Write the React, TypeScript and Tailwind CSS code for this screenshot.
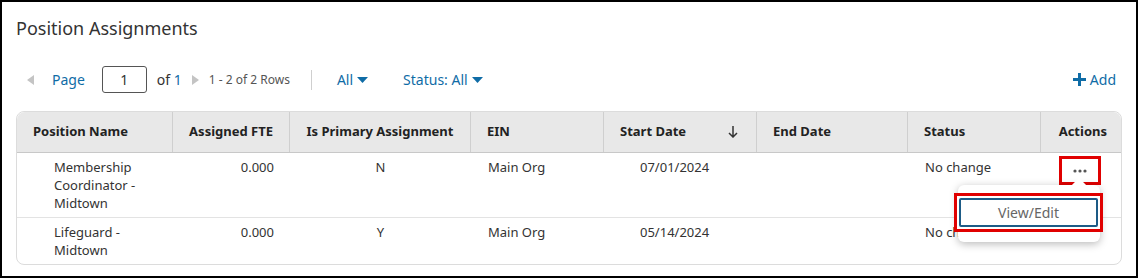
import React from "react";

type Row = {
  name: string[];
  fte: string;
  primary: string;
  ein: string;
  start: string;
  end: string;
  status: string;
};

const rows: Row[] = [
  {
    name: ["Membership", "Coordinator -", "Midtown"],
    fte: "0.000",
    primary: "N",
    ein: "Main Org",
    start: "07/01/2024",
    end: "",
    status: "No change",
  },
  {
    name: ["Lifeguard -", "Midtown"],
    fte: "0.000",
    primary: "Y",
    ein: "Main Org",
    start: "05/14/2024",
    end: "",
    status: "No change",
  },
];

const cols =
  "grid grid-cols-[156px_117px_181px_133px_153px_151px_133px_82px]";

const Caret = () => (
  <svg width="11" height="6" viewBox="0 0 11 6" className="ml-[4px] mt-[1px]">
    <path d="M0 0h11L5.5 6z" fill="#0f6ca6" />
  </svg>
);

const HeaderCell = ({
  children,
  className = "",
  last = false,
}: {
  children: React.ReactNode;
  className?: string;
  last?: boolean;
}) => (
  <div
    className={`flex h-[40px] items-center whitespace-nowrap px-[16px] text-[13px] font-bold text-[#222] ${
      last ? "" : "border-r border-[#cfcfcf]"
    } ${className}`}
  >
    {children}
  </div>
);

export default function App() {
  return (
    <div
      className="h-[278px] w-[1138px] border-2 border-black bg-white text-[#333]"
      style={{ fontFamily: '"Noto Sans", "Open Sans", sans-serif' }}
    >
      <h2 className="pl-[14px] pt-[14px] text-[18px] leading-[24px] text-[#333]">
        Position Assignments
      </h2>

      <div className="mt-[26px] flex h-[27px] items-center pl-[25px] pr-[20px] text-[14px]">
        <svg width="7" height="10" viewBox="0 0 7 10">
          <path d="M7 0v10L0 5z" fill="#c4c4c4" />
        </svg>
        <span className="ml-[18px] text-[#0f6ca6]">Page</span>
        <div className="ml-[17px] flex h-[27px] w-[45px] items-center justify-center rounded-[3px] border border-[#555]">
          1
        </div>
        <span className="ml-[10px]">
          of <span className="text-[#0f6ca6]">1</span>
        </span>
        <svg width="7" height="10" viewBox="0 0 7 10" className="ml-[10px]">
          <path d="M0 0v10l7-5z" fill="#c4c4c4" />
        </svg>
        <span className="ml-[10px] text-[12px] text-[#555]">
          1 - 2 of 2 Rows
        </span>
        <div className="ml-[21px] h-[20px] w-px bg-[#cfcfcf]" />
        <span className="ml-[25px] flex items-center text-[#0f6ca6]">
          All
          <Caret />
        </span>
        <span className="ml-[35px] flex items-center text-[#0f6ca6]">
          Status: All
          <Caret />
        </span>
        <span className="ml-auto flex items-center text-[#0f6ca6]">
          <svg width="13" height="13" viewBox="0 0 13 13" className="mr-[4px]">
            <path d="M5 0h3v5h5v3H8v5H5V8H0V5h5z" fill="#0f6ca6" />
          </svg>
          Add
        </span>
      </div>

      <div className="relative mx-[14px] mt-[18px] rounded-[8px] border border-[#dcdcdc]">
        <div className={`${cols} rounded-t-[8px] border-b border-[#c8c8c8] bg-[#e8e8e8]`}>
          <HeaderCell>Position Name</HeaderCell>
          <HeaderCell className="justify-end">Assigned FTE</HeaderCell>
          <HeaderCell className="justify-center">Is Primary Assignment</HeaderCell>
          <HeaderCell>EIN</HeaderCell>
          <HeaderCell className="justify-between">
            Start Date
            <svg width="10" height="12" viewBox="0 0 10 12" className="mr-[2px]">
              <path
                d="M5 0v11M1 7l4 4 4-4"
                stroke="#333"
                strokeWidth="1.5"
                fill="none"
              />
            </svg>
          </HeaderCell>
          <HeaderCell>End Date</HeaderCell>
          <HeaderCell>Status</HeaderCell>
          <HeaderCell className="justify-end" last>
            Actions
          </HeaderCell>
        </div>

        {rows.map((r, i) => (
          <div
            key={i}
            className={`${cols} pb-[5px] pt-[5px] text-[13px] leading-[18px] ${
              i === 0 ? "border-b border-[#e3e3e3]" : ""
            }`}
          >
            <div className="pl-[37px]">
              {r.name.map((l) => (
                <div key={l}>{l}</div>
              ))}
            </div>
            <div className="pr-[16px] text-right">{r.fte}</div>
            <div className="text-center">{r.primary}</div>
            <div className="pl-[17px]">{r.ein}</div>
            <div className="pl-[36px]">{r.start}</div>
            <div className="pl-[17px]">{r.end}</div>
            <div className="pl-[17px]">{r.status}</div>
            <div className="relative">
              {i === 0 && (
                <div className="absolute left-[18px] top-[-2px] flex h-[29px] w-[42px] items-center justify-center border-[3px] border-[#e00000]">
                  <svg width="14" height="4" viewBox="0 0 14 4">
                    <circle cx="2" cy="2" r="1.6" fill="#555" />
                    <circle cx="7" cy="2" r="1.6" fill="#555" />
                    <circle cx="12" cy="2" r="1.6" fill="#555" />
                  </svg>
                </div>
              )}
            </div>
          </div>
        ))}

        <div className="absolute left-[941px] top-[73px] h-[57px] w-[142px] rounded-[6px] bg-white shadow-[0_2px_8px_rgba(0,0,0,0.28)]">
          <div className="absolute left-[116px] top-[-5px] h-[10px] w-[10px] rotate-45 bg-white" />
        </div>
        <div className="absolute left-[937px] top-[81px] h-[39px] w-[149px] border-[3px] border-[#e00000] bg-white p-[2px]">
          <div className="flex h-full items-center justify-center rounded-[2px] border-2 border-[#1d5b86] text-[14px] text-[#666]">
            View/Edit
          </div>
        </div>
      </div>
    </div>
  );
}
